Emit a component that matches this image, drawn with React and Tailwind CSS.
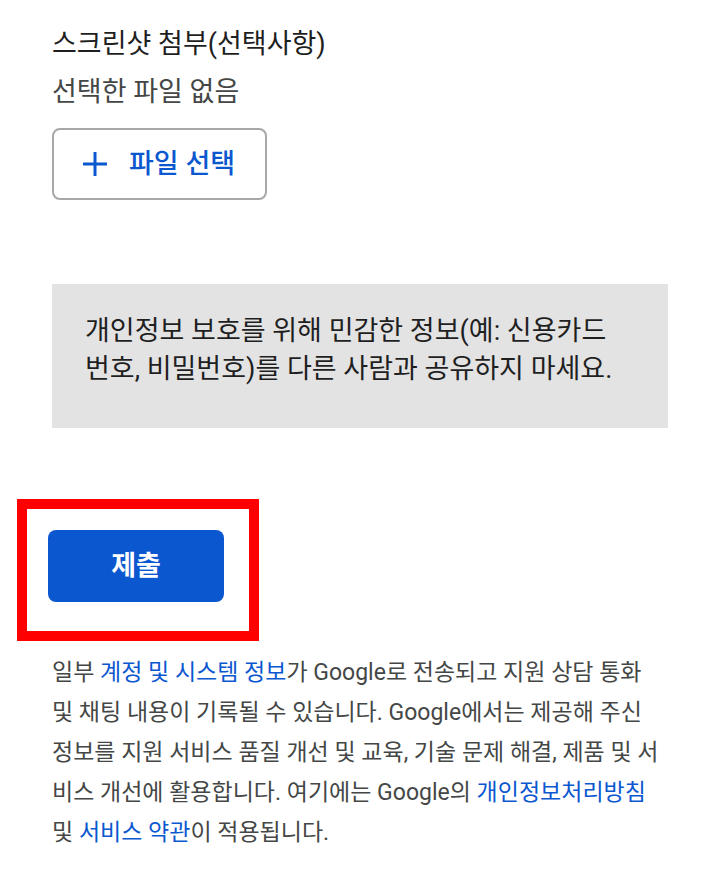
import React from "react";

const font = { fontFamily: "Roboto, 'Noto Sans CJK KR', 'Noto Sans', sans-serif" };

export default function App() {
  return (
    <div className="min-h-[889px] w-[720px] bg-white" style={font}>
      <div className="flex flex-col pl-[52px] pr-[52px] pt-[26px]">
        <div className="text-[27px] leading-[36px] text-[#1f1f1f]">스크린샷 첨부(선택사항)</div>
        <div className="mt-3 text-[27px] leading-[36px] text-[#444746]">선택한 파일 없음</div>
        <div className="mt-[18px]">
          <button className="flex h-[72px] w-[215px] items-center rounded-lg border-2 border-[#a8a8a8] bg-white pl-[28px] text-[#0b57d0]">
            <svg width="26" height="26" viewBox="0 0 26 26" className="shrink-0">
              <path d="M13 1v24M1 13h24" stroke="#0b57d0" strokeWidth="3" fill="none" />
            </svg>
            <span className="ml-[21px] text-[27px] font-medium leading-none">파일 선택</span>
          </button>
        </div>
        <div className="mt-[84px] w-[616px] bg-[#e3e3e3] pb-[40px] pl-[33px] pr-4 pt-[28px] text-[27px] leading-[38px] text-[#1f1f1f]">
          <div>개인정보 보호를 위해 민감한 정보(예: 신용카드</div>
          <div>번호, 비밀번호)를 다른 사람과 공유하지 마세요.</div>
        </div>
        <div className="relative mt-[102px] w-[176px] -ml-1">
          <button className="flex h-[72px] w-[176px] items-center justify-center rounded-lg bg-[#0b57d0] text-[27px] font-bold text-white">
            제출
          </button>
          <div className="pointer-events-none absolute -left-[31px] -top-[31px] h-[142px] w-[242px] border-[10px] border-[#ff0000]" />
        </div>
        <div className="mt-[51px] w-[640px] whitespace-nowrap text-[23px] leading-[40px] text-[#444746]">
          <div>
            일부 <span className="text-[#0b57d0]">계정 및 시스템 정보</span>가 Google로 전송되고 지원 상담 통화
          </div>
          <div>및 채팅 내용이 기록될 수 있습니다. Google에서는 제공해 주신</div>
          <div>정보를 지원 서비스 품질 개선 및 교육, 기술 문제 해결, 제품 및 서</div>
          <div>
            비스 개선에 활용합니다. 여기에는 Google의 <span className="text-[#0b57d0]">개인정보처리방침</span>
          </div>
          <div>
            및 <span className="text-[#0b57d0]">서비스 약관</span>이 적용됩니다.
          </div>
        </div>
      </div>
    </div>
  );
}
